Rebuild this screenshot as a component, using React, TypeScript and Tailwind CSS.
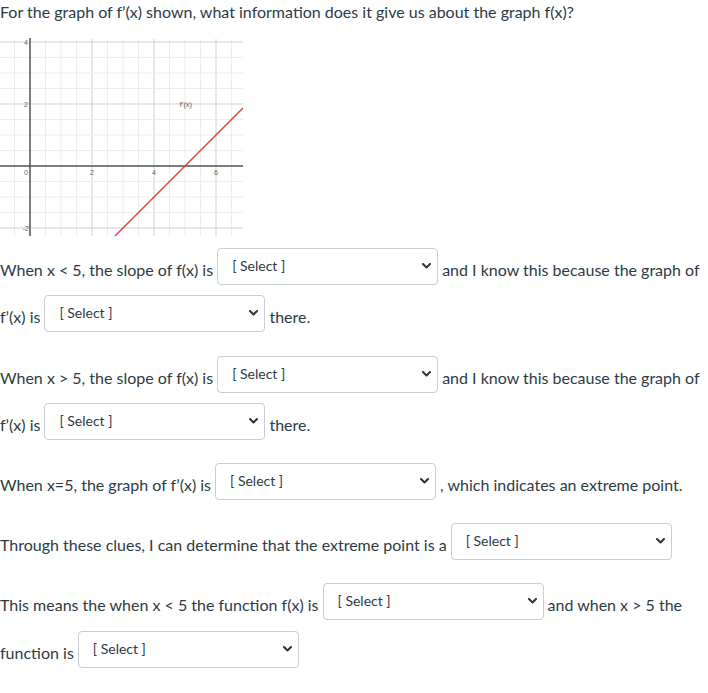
import React from "react";

const Chevron = () => (
  <svg width="9" height="6" viewBox="0 0 9 6" className="shrink-0">
    <path d="M1 1l3.5 3.5L8 1" fill="none" stroke="#333" strokeWidth="2" strokeLinecap="round" strokeLinejoin="round" />
  </svg>
);

const Select = () => (
  <div className="w-[221px] h-[37px] shrink-0 border border-[#c7cdd1] rounded-[4px] bg-white flex items-center justify-between pl-[14px] pr-[6px] pb-[2px]">
    <span className="text-[14px] leading-none text-[#2d3b45]">[ Select ]</span>
    <Chevron />
  </div>
);

const T = ({ children }: { children: React.ReactNode }) => (
  <span className="leading-6 pb-[3px] whitespace-nowrap">{children}</span>
);

const Row = ({ className, children }: { className: string; children: React.ReactNode }) => (
  <div className={`flex items-end gap-[4px] h-[37px] ${className}`}>{children}</div>
);

const Graph = () => {
  const ox = 30;
  const oy = 129;
  const u = 31;
  const vx: number[] = [];
  for (let k = -2; k <= 14; k++) vx.push(k);
  const hy: number[] = [];
  for (let k = -5; k <= 8; k++) hy.push(k);
  return (
    <svg width="243" height="199" viewBox="0 0 243 199" className="block">
      {vx.map((k) => {
        const x = ox + k * 15.5;
        const major = k % 4 === 0 && k !== 0;
        return (
          <line key={"v" + k} x1={x} y1={2} x2={x} y2={199} stroke={major ? "#cfcfcf" : "#ededed"} strokeWidth={1} />
        );
      })}
      {hy.map((k) => {
        const y = oy - k * 15.5;
        const major = k % 4 === 0 && k !== 0;
        return (
          <line key={"h" + k} x1={0} y1={y} x2={243} y2={y} stroke={major ? "#cfcfcf" : "#ededed"} strokeWidth={1} />
        );
      })}
      <line x1={ox} y1={1} x2={ox} y2={199} stroke="#555" strokeWidth={1.5} />
      <line x1={0} y1={oy} x2={243} y2={oy} stroke="#555" strokeWidth={1.5} />
      <g fontFamily="Arial, sans-serif" fontSize="7" fill="#666">
        <text x={28} y={8} textAnchor="end">4</text>
        <text x={28} y={70} textAnchor="end">2</text>
        <text x={28} y={138} textAnchor="end">0</text>
        <text x={29} y={194} textAnchor="end">-2</text>
        <text x={ox + 2 * u} y={138} textAnchor="middle">2</text>
        <text x={ox + 4 * u} y={138} textAnchor="middle">4</text>
        <text x={ox + 6 * u} y={138} textAnchor="middle">6</text>
        <text x={186} y={70} textAnchor="middle" fontSize="7.5" fill="#555">f'(x)</text>
      </g>
      <line x1={ox + 2.6 * u} y1={oy + 2.4 * u} x2={ox + 7.1 * u} y2={oy - 2.1 * u} stroke="#d6453d" strokeWidth={1.4} />
    </svg>
  );
};

export default function App() {
  return (
    <div className="w-[708px] h-[693px] bg-white overflow-hidden font-['Lato','Noto_Sans',sans-serif] text-[16px] text-[#2d3b45]">
      <p className="leading-6 h-6 whitespace-nowrap">For the graph of f’(x) shown, what information does it give us about the graph f(x)?</p>
      <div className="mt-[13px]">
        <Graph />
      </div>
      <Row className="mt-[12px]">
        <T>When x &lt; 5, the slope of f(x) is</T>
        <Select />
        <T>and I know this because the graph of</T>
      </Row>
      <Row className="mt-[10px]">
        <T>f’(x) is</T>
        <Select />
        <T>there.</T>
      </Row>
      <Row className="mt-[24px]">
        <T>When x &gt; 5, the slope of f(x) is</T>
        <Select />
        <T>and I know this because the graph of</T>
      </Row>
      <Row className="mt-[10px]">
        <T>f’(x) is</T>
        <Select />
        <T>there.</T>
      </Row>
      <Row className="mt-[23px]">
        <T>When x=5, the graph of f’(x) is</T>
        <Select />
        <T>, which indicates an extreme point.</T>
      </Row>
      <Row className="mt-[23px]">
        <T>Through these clues, I can determine that the extreme point is a</T>
        <Select />
      </Row>
      <Row className="mt-[23px]">
        <T>This means the when x &lt; 5 the function f(x) is</T>
        <Select />
        <T>and when x &gt; 5 the</T>
      </Row>
      <Row className="mt-[11px]">
        <T>function is</T>
        <Select />
      </Row>
    </div>
  );
}
